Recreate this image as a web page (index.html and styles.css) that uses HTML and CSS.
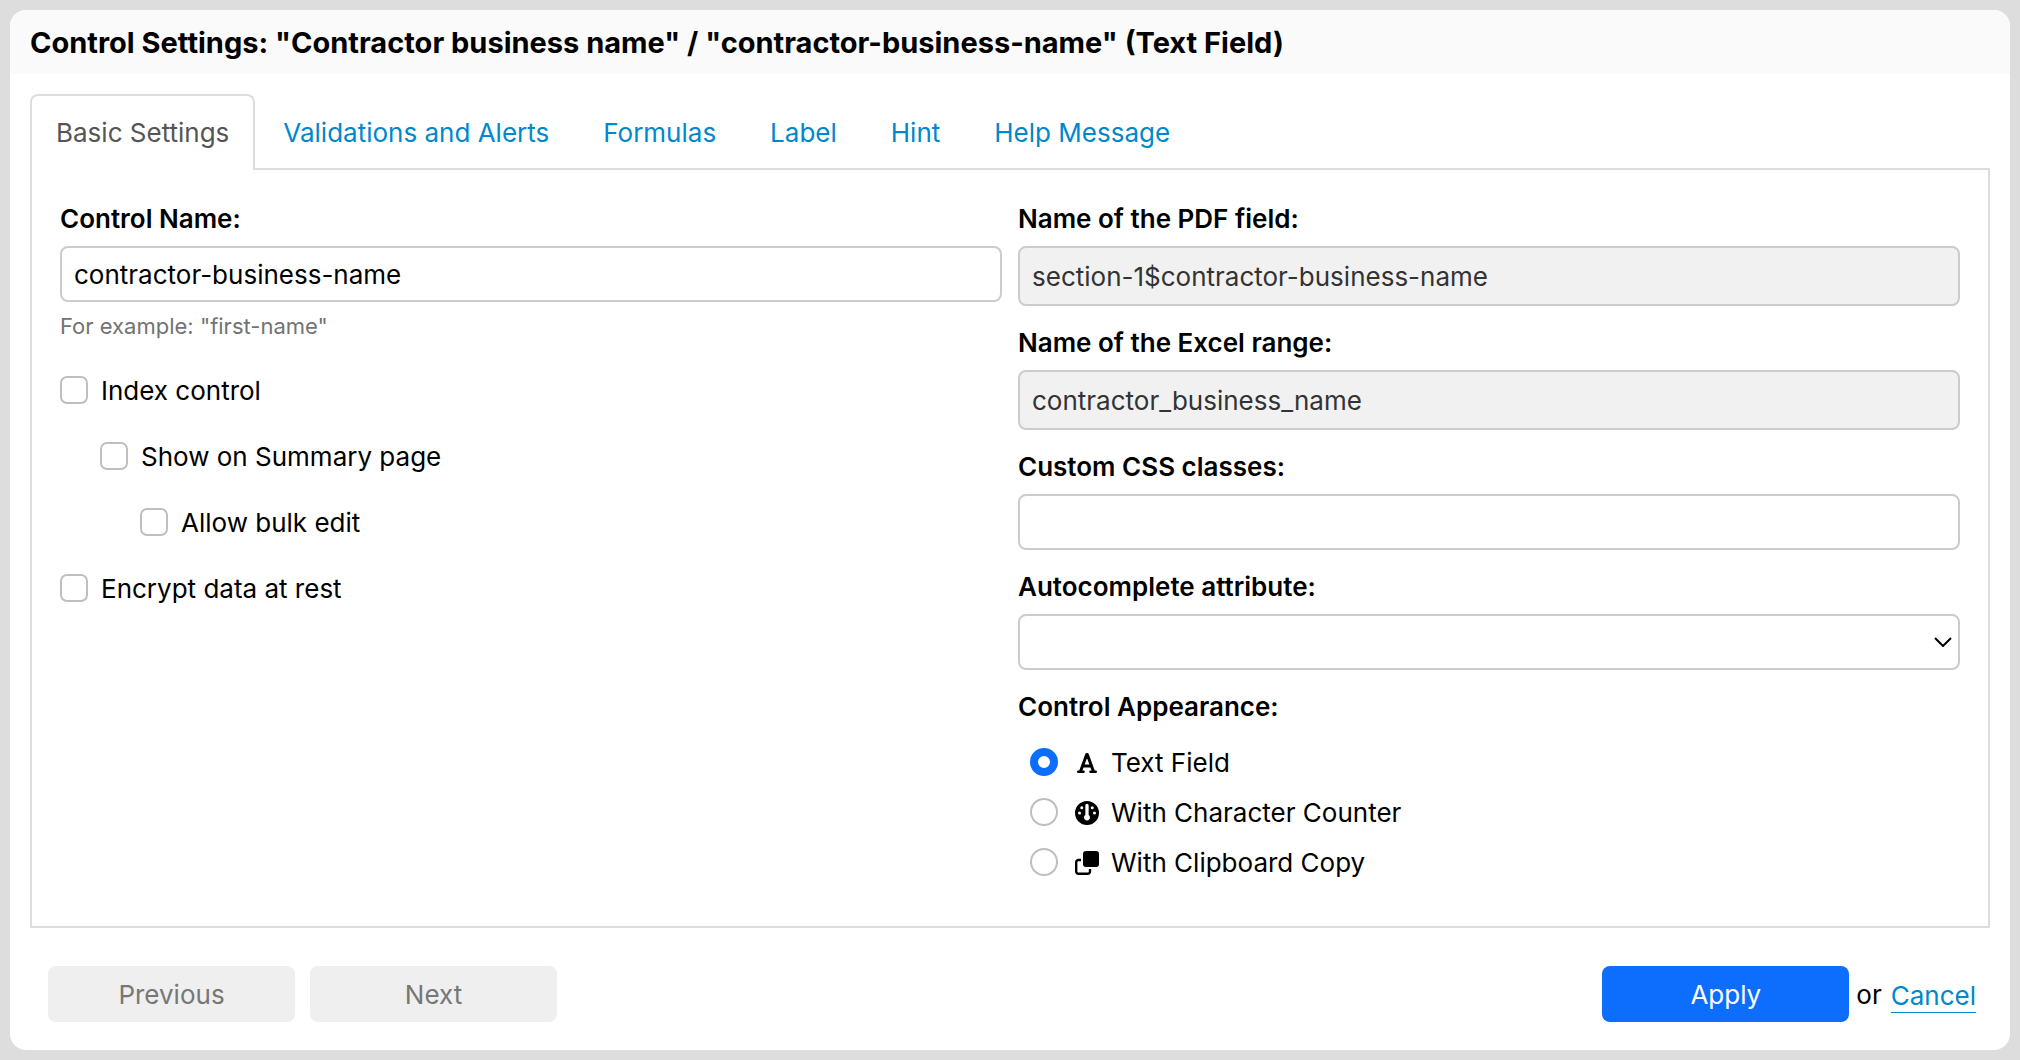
FILE: index.html
```html
<!DOCTYPE html>
<html lang="en">
<head>
<meta charset="utf-8">
<meta name="viewport" content="width=device-width, initial-scale=1">
<title>Control Settings</title>
<link rel="stylesheet" href="styles.css">
</head>
<body>
<main class="dialog">
  <header class="dialog-header">
    <h1 class="dialog-title">Control Settings: "Contractor business name" / "contractor-business-name" (Text Field)</h1>
  </header>
  <form class="dialog-body">
    <nav class="tabs">
      <a class="tab tab-active" href="#basic" aria-current="page">Basic Settings</a>
      <a class="tab" href="#validations">Validations and Alerts</a>
      <a class="tab" href="#formulas">Formulas</a>
      <a class="tab" href="#label">Label</a>
      <a class="tab" href="#hint">Hint</a>
      <a class="tab" href="#help">Help Message</a>
    </nav>
    <section class="panel" id="basic">
      <div class="column">
        <label class="field-label" for="control-name">Control Name:</label>
        <input class="field" id="control-name" type="text" value="contractor-business-name">
        <p class="help">For example: "first-name"</p>
        <div class="checks">
          <label class="check"><input class="box" type="checkbox"><span class="choice-text">Index control</span></label>
          <label class="check level-2"><input class="box" type="checkbox"><span class="choice-text">Show on Summary page</span></label>
          <label class="check level-3"><input class="box" type="checkbox"><span class="choice-text">Allow bulk edit</span></label>
          <label class="check"><input class="box" type="checkbox"><span class="choice-text">Encrypt data at rest</span></label>
        </div>
      </div>
      <div class="column">
        <label class="field-label" for="pdf-name">Name of the PDF field:</label>
        <input class="field field-readonly" id="pdf-name" type="text" value="section-1$contractor-business-name" readonly>
        <label class="field-label" for="excel-name">Name of the Excel range:</label>
        <input class="field field-readonly" id="excel-name" type="text" value="contractor_business_name" readonly>
        <label class="field-label" for="css-classes">Custom CSS classes:</label>
        <input class="field" id="css-classes" type="text">
        <label class="field-label" for="autocomplete">Autocomplete attribute:</label>
        <div class="select-wrap">
          <select class="field" id="autocomplete"><option></option></select>
          <svg class="chevron" viewBox="0 0 18 10" aria-hidden="true"><path d="M1 1l8 8 8-8" fill="none" stroke="currentColor" stroke-width="2"/></svg>
        </div>
        <fieldset class="appearance">
          <legend class="field-label">Control Appearance:</legend>
          <label class="option"><input class="radio" type="radio" name="appearance" checked>
            <svg class="icon" viewBox="0 0 24 24" aria-hidden="true"><path fill="none" stroke="currentColor" stroke-width="3" stroke-linecap="round" stroke-linejoin="round" d="M5.600 20.200 11.700 3.500h.6l6.100 16.700M8 15h8"/><path fill="none" stroke="currentColor" stroke-width="2.400" stroke-linecap="round" d="M3.200 20.800h5.400M15.400 20.800h5.400"/></svg>
            <span class="choice-text">Text Field</span></label>
          <label class="option"><input class="radio" type="radio" name="appearance">
            <svg class="icon" viewBox="0 0 512 512" aria-hidden="true"><path fill="currentColor" d="M0 256a256 256 0 1 1 512 0A256 256 0 1 1 0 256zM256 416c35.300 0 64-28.700 64-64 0-22.300-11.400-42-28.800-53.500V96c0-19.400-15.800-35.200-35.200-35.200S220.800 76.600 220.800 96v202.500C203.400 310 192 329.700 192 352c0 35.300 28.700 64 64 64zM176 144a32 32 0 1 0-64 0 32 32 0 1 0 64 0zM96 288a32 32 0 1 0 0-64 32 32 0 1 0 0 64zm352-32a32 32 0 1 0-64 0 32 32 0 1 0 64 0zM368 176a32 32 0 1 0 0-64 32 32 0 1 0 0 64z" fill-rule="evenodd"/></svg>
            <span class="choice-text">With Character Counter</span></label>
          <label class="option"><input class="radio" type="radio" name="appearance">
            <svg class="icon" viewBox="0 0 24 24" aria-hidden="true"><rect x="8" width="16" height="16" rx="3" fill="currentColor"/><path d="M6 9H3.500A2.200 2.200 0 0 0 1.200 11.200v9.400a2.200 2.200 0 0 0 2.200 2.200h9.400a2.200 2.200 0 0 0 2.200-2.200V18" fill="none" stroke="currentColor" stroke-width="2.400"/></svg>
            <span class="choice-text">With Clipboard Copy</span></label>
        </fieldset>
      </div>
    </section>
    <footer class="actions">
      <button class="button" type="button" disabled>Previous</button>
      <button class="button" type="button" disabled>Next</button>
      <div class="confirm">
        <button class="button button-primary" type="submit">Apply</button>
        <span class="or">or</span>
        <a class="cancel" href="#cancel">Cancel</a>
      </div>
    </footer>
  </form>
</main>
</body>
</html>
```
FILE: styles.css
```css
* {
  box-sizing: border-box;
}

body {
  margin: 0;
  padding: 10px;
  background: #ddd;
  color: #000;
  font: 26px/32px Inter, "Liberation Sans", sans-serif;
}

.dialog {
  background: #fff;
  border-radius: 16px;
  overflow: hidden;
}

.dialog-header {
  padding: 17px 20px 15px;
  background: #fafafa;
}

.dialog-title {
  margin: 0;
  font-size: 29px;
  line-height: 32px;
  font-weight: 700;
}

.dialog-body {
  padding: 20px 20px 28px;
}

.tabs {
  display: flex;
  gap: 2px;
  position: relative;
}

.tab {
  padding: 21px 24px 19px;
  border: 2px solid transparent;
  border-bottom: 0;
  color: #0088cc;
  text-decoration: none;
}

.tab-active {
  margin-bottom: -2px;
  padding-bottom: 21px;
  border-color: #ddd;
  border-radius: 8px 8px 0 0;
  background: #fff;
  color: #555;
}

.panel {
  display: grid;
  grid-template-columns: 1fr 1fr;
  gap: 16px;
  padding: 31px 28px 48px;
  border: 2px solid #ddd;
}

.column {
  display: flex;
  flex-direction: column;
}

.field-label {
  padding: 19px 0 9px;
  line-height: 36px;
  font-weight: 600;
}

.column > .field-label:first-child {
  padding-top: 0;
}

.field {
  width: 100%;
  height: 56px;
  padding: 0 12px;
  border: 2px solid #ccc;
  border-radius: 8px;
  background: #fff;
  color: #000;
  font: inherit;
}

.field-readonly {
  height: 60px;
  background: #f1f1f1;
  color: #333;
}

.help {
  margin: 8px 0 0;
  color: #737373;
  font-size: 22px;
}

.checks {
  display: grid;
  gap: 34px;
  padding-top: 32px;
}

.check {
  display: flex;
  align-items: center;
  gap: 13px;
}

.level-2 {
  margin-left: 40px;
}

.level-3 {
  margin-left: 80px;
}

.choice-text {
  padding-top: 2px;
  line-height: 30px;
}

.box,
.radio {
  appearance: none;
  flex: none;
  width: 28px;
  height: 28px;
  margin: 0;
  border: 2px solid #bfbfbf;
  border-radius: 7px;
  background: #fff;
}

.box:checked {
  background: #0d6efd;
}

.radio {
  margin-right: 17px;
  border-radius: 50%;
}

.radio:checked {
  border: 8px solid #0d6efd;
}

.select-wrap {
  display: grid;
}

.select-wrap > * {
  grid-area: 1 / 1;
}

.select-wrap .field {
  appearance: none;
}

.chevron {
  width: 18px;
  height: 10px;
  margin-right: 8px;
  place-self: center end;
  pointer-events: none;
}

.appearance {
  display: grid;
  gap: 18px;
  margin: 0;
  padding: 12px 12px 0;
  border: 0;
}

.appearance .field-label {
  margin-left: -12px;
}

.option {
  display: flex;
  align-items: center;
}

.icon {
  width: 24px;
  height: 24px;
  margin: 2px 12px 0 0;
}

.actions {
  display: flex;
  align-items: center;
  gap: 15px;
  padding: 38px 14px 0 18px;
}

.button {
  width: 247px;
  height: 56px;
  padding: 2px 0 0;
  border: 0;
  border-radius: 8px;
  background: #efefef;
  color: #777;
  font: inherit;
}

.button-primary {
  background: #0d6efd;
  color: #fff;
}

.confirm {
  display: flex;
  align-items: center;
  gap: 7px;
  margin-left: auto;
}

.or {
  padding-top: 2px;
}

.cancel {
  margin: 4px 0 0 2px;
  border-bottom: 1px solid #0088cc;
  color: #0088cc;
  text-decoration: none;
}
```
